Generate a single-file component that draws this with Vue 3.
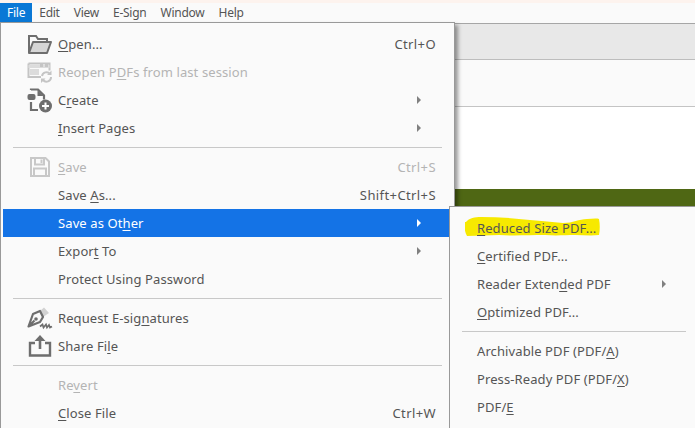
<template>
  <div class="app">
    <div class="strip"></div>
    <div class="menubar">
      <span v-for="m in menubar" :key="m" class="top" :class="{ on: m === 'File' }">{{ m }}</span>
    </div>
    <div class="bar-gray"></div>
    <div class="bar-light"></div>
    <div class="page"></div>
    <div class="green"></div>

    <div class="menu">
      <template v-for="(group, g) in fileMenu" :key="g">
        <div v-if="g > 0" class="divider"></div>
        <div
          v-for="item in group"
          :key="item.label.join('')"
          class="item"
          :class="{ off: item.off, active: item.active }"
        >
          <span class="icon">
            <svg v-if="item.icon === 'open'" width="26" height="22" viewBox="0 0 26 22" fill="none">
              <path d="M2 20V3h7l2 3h9v3" stroke="#6e6e6e" stroke-width="2" />
              <path d="M2 20l4-11h18l-4 11z" fill="#d6d6d6" stroke="#6e6e6e" stroke-width="2" stroke-linejoin="round" />
            </svg>
            <svg v-else-if="item.icon === 'reopen'" width="26" height="22" viewBox="0 0 26 22" fill="none">
              <path d="M1.500 2.500h21v7M14 16H1.500v-13.500" stroke="#c4c4c4" stroke-width="2" />
              <path d="M1.500 4h21v3h-21zM3 8h9v6H3z" fill="#dcdcdc" />
              <path d="M13 2h3v4h-3zM18 2h3v4h-3z" fill="#c4c4c4" />
              <path d="M15 15a4.500 4.500 0 0 1 8-2M24 16a4.500 4.500 0 0 1-8 3" stroke="#c4c4c4" stroke-width="2" />
              <path d="M24.500 9.500v4.500h-4.500zM14 22v-4.500h4.500z" fill="#c4c4c4" />
            </svg>
            <svg v-else-if="item.icon === 'create'" width="26" height="25" viewBox="0 0 26 25" fill="none">
              <rect x="0.500" y="6" width="8" height="6" rx="2" fill="#6e6e6e" />
              <path d="M4 2V1.500h7l6 6v4M4 14v8h7" stroke="#6e6e6e" stroke-width="2.200" />
              <path d="M10.500 2v6h6z" fill="#6e6e6e" />
              <circle cx="18.500" cy="18" r="6.500" fill="#6e6e6e" />
              <path d="M18.500 14.500v7M15 18h7" stroke="#fff" stroke-width="2" />
            </svg>
            <svg v-else-if="item.icon === 'save'" width="20" height="20" viewBox="0 0 20 20" fill="none">
              <path d="M1 1h14.500L19 4.500V19H1z" stroke="#c8c8c8" stroke-width="2" />
              <path d="M5 1v6.500h9V1M4 19v-7.500h12V19" stroke="#c8c8c8" stroke-width="2" />
              <rect x="10.500" y="2.500" width="2" height="3.500" fill="#c8c8c8" />
            </svg>
            <svg v-else-if="item.icon === 'sign'" width="26" height="24" viewBox="0 0 26 24" fill="none">
              <path d="M17 1.500l5 5.500-6 4-3-6z" fill="#d2d2d2" />
              <path d="M13 5L6 8 1.500 20.500 13 16l3-5zM1.500 20.500l6-6" stroke="#6e6e6e" stroke-width="2.200" stroke-linejoin="round" />
              <circle cx="9" cy="13" r="1.800" fill="#6e6e6e" />
              <path d="M13 20.500l2.500-2 1 3 2.500-3 1 3 2-2.500 1 2.500 2-1" stroke="#6e6e6e" stroke-width="1.700" />
            </svg>
            <svg v-else-if="item.icon === 'share'" width="24" height="22" viewBox="0 0 24 22" fill="none">
              <path d="M7 8H2v12.500h20V8h-5" stroke="#6e6e6e" stroke-width="2.400" />
              <path d="M12 14V3" stroke="#6e6e6e" stroke-width="2.600" />
              <path d="M12 0l5.500 6h-11z" fill="#6e6e6e" />
            </svg>
          </span>
          <span class="label">{{ item.label[0] }}<u>{{ item.label[1] }}</u>{{ item.label[2] }}</span>
          <span v-if="item.keys" class="keys">{{ item.keys }}</span>
          <span v-if="item.sub" class="arrow"></span>
        </div>
      </template>
    </div>

    <div class="submenu">
      <template v-for="(group, g) in otherMenu" :key="g">
        <div v-if="g > 0" class="divider sub-divider"></div>
        <div v-for="item in group" :key="item.label.join('')" class="sub-item">
          <svg v-if="item.mark" class="marker" width="138" height="24" viewBox="0 0 138 24">
            <path
              d="M1 6C4 2 10 1 16 1c16 0 32 1 49 3 12 1 22 2 33 3 10 0 16-4 24-4 4 0 9-1 12 0 1 5 1 11 0 16-8 1-16 0-24 0-10 0-18 1-30 0-16 0-30 1-46 0-10 0-20 1-32 1-2-3-3-8-2-14z"
              fill="#f7e900"
            />
          </svg>
          <span class="label">{{ item.label[0] }}<u>{{ item.label[1] }}</u>{{ item.label[2] }}</span>
          <span v-if="item.sub" class="arrow sub-arrow"></span>
        </div>
      </template>
    </div>
  </div>
</template>

<script setup>
const menubar = ['File', 'Edit', 'View', 'E-Sign', 'Window', 'Help']

const fileMenu = [
  [
    { label: ['', 'O', 'pen...'], keys: 'Ctrl+O', icon: 'open' },
    { label: ['Reopen P', 'D', 'Fs from last session'], icon: 'reopen', off: true },
    { label: ['C', 'r', 'eate'], icon: 'create', sub: true },
    { label: ['', 'I', 'nsert Pages'], sub: true },
  ],
  [
    { label: ['', 'S', 'ave'], keys: 'Ctrl+S', icon: 'save', off: true },
    { label: ['Save ', 'A', 's...'], keys: 'Shift+Ctrl+S' },
    { label: ['Save as Ot', 'h', 'er'], sub: true, active: true },
    { label: ['Expor', 't', ' To'], sub: true },
    { label: ['Protect Using Password', '', ''] },
  ],
  [
    { label: ['Request E-sig', 'n', 'atures'], icon: 'sign' },
    { label: ['Share Fi', 'l', 'e'], icon: 'share' },
  ],
  [
    { label: ['Re', 'v', 'ert'], off: true },
    { label: ['', 'C', 'lose File'], keys: 'Ctrl+W' },
  ],
]

const otherMenu = [
  [
    { label: ['', 'R', 'educed Size PDF...'], mark: true },
    { label: ['', 'C', 'ertified PDF...'] },
    { label: ['Reader Exten', 'd', 'ed PDF'], sub: true },
    { label: ['', 'O', 'ptimized PDF...'] },
  ],
  [
    { label: ['Archivable PDF (PDF/', 'A', ')'] },
    { label: ['Press-Ready PDF (PDF/', 'X', ')'] },
    { label: ['PDF/', 'E', ''] },
  ],
]
</script>

<style>
html,
body {
  margin: 0;
  overflow: hidden;
}
</style>

<style scoped>
.app {
  position: relative;
  width: 695px;
  height: 428px;
  overflow: hidden;
  background: #fff;
  font-family: "Noto Sans", "Open Sans", sans-serif;
  font-size: 13px;
  letter-spacing: 0.1px;
  color: #555;
}
.strip {
  height: 3px;
  background: #fdf3ee;
}
.menubar {
  display: flex;
  height: 20px;
  background: #fafafa;
  border-bottom: 1px solid #a6a6a6;
}
.top {
  padding: 0 7px;
  height: 19px;
  line-height: 19px;
  font-size: 12px;
  letter-spacing: -0.25px;
}
.top.on {
  background: #0a78d6;
  color: #fff;
}
.bar-gray {
  height: 35px;
  background: #e8e8e8;
  border-bottom: 1px solid #bdbdbd;
}
.bar-light {
  height: 46px;
  background: #fafafa;
  border-bottom: 1px solid #c4c4c4;
}
.page {
  height: 82px;
  background: #fff;
}
.green {
  height: 30px;
  background: #4f6714;
}
.menu {
  position: absolute;
  left: 0;
  top: 22px;
  width: 455px;
  height: 420px;
  box-sizing: border-box;
  padding: 7px 12px 0 2px;
  background: #fafafa;
  border: 1px solid #999;
  box-shadow: 3px 3px 4px rgba(0, 0, 0, 0.4);
}
.item {
  position: relative;
  display: flex;
  align-items: center;
  height: 28px;
  margin-right: -11px;
  padding-right: 17px;
}
.item.off {
  color: #b4b4b4;
}
.item.active {
  background: #1473e6;
  color: #fff;
}
.icon {
  display: flex;
  align-items: center;
  justify-content: center;
  flex: none;
  width: 55px;
  padding: 0 0 0 19px;
  box-sizing: border-box;
}
.label {
  position: relative;
  white-space: pre;
}
u {
  text-underline-offset: 2px;
}
.keys {
  margin-left: auto;
  letter-spacing: 0.4px;
}
.arrow {
  flex: none;
  margin-left: auto;
  margin-right: 15px;
  width: 0;
  height: 0;
  border-left: 4px solid #808080;
  border-top: 4px solid transparent;
  border-bottom: 4px solid transparent;
}
.active .arrow {
  border-left-color: #fff;
}
.divider {
  height: 1px;
  margin: 5px 0 5px 10px;
  background: #c8c8c8;
}
.submenu {
  position: absolute;
  left: 449px;
  top: 206px;
  width: 260px;
  height: 240px;
  box-sizing: border-box;
  padding: 7px 0 0 0;
  background: #fafafa;
  border: 1px solid #999;
  border-right: 0;
}
.sub-item {
  position: relative;
  display: flex;
  align-items: center;
  box-sizing: border-box;
  width: 216px;
  height: 28px;
  padding-left: 27px;
}
.marker {
  position: absolute;
  left: 15px;
  top: 2px;
}
.sub-divider {
  width: 224px;
  margin: 5px 0 5px 12px;
}
.sub-arrow {
  margin-right: 0;
}
</style>
